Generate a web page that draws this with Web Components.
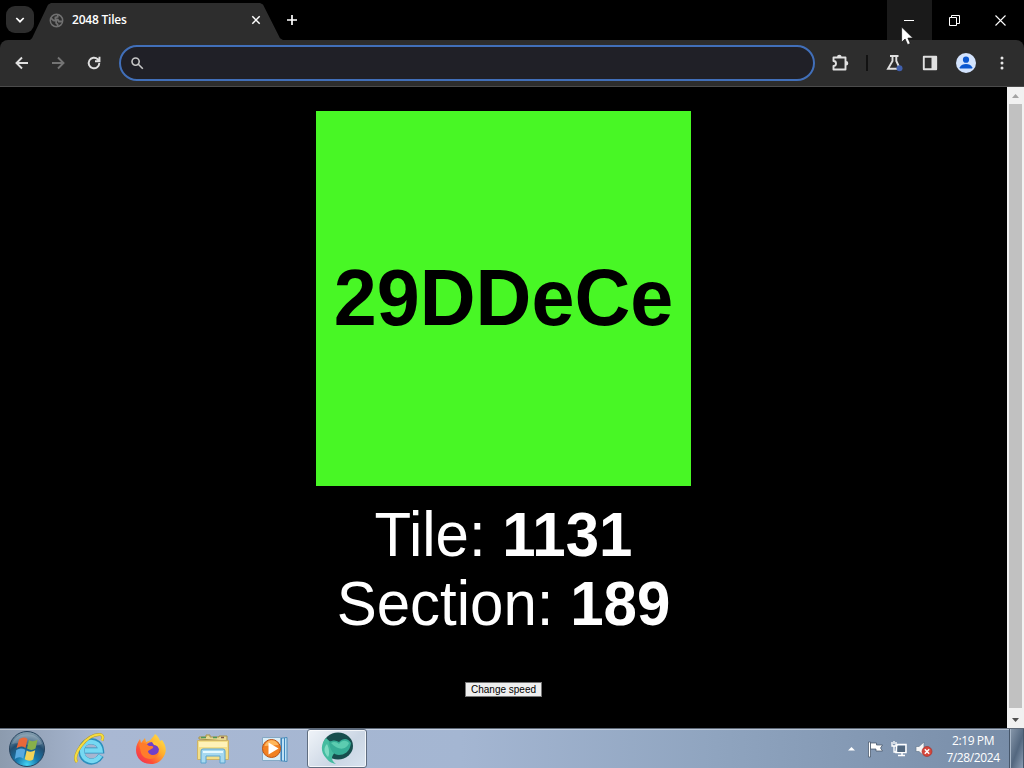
<!DOCTYPE html>
<html lang="en">
<head>
<meta charset="utf-8">
<title>2048 Tiles</title>
<style>
    html, body { margin: 0; height: 100%; overflow: hidden; background: #000; }
    body { font-family: "Liberation Sans", Arial, sans-serif; }
</style>
</head>
<body>
<desktop-screen>
    <browser-tabs slot="window">2048 Tiles</browser-tabs>
    <browser-toolbar slot="window"></browser-toolbar>
    <page-view slot="window">
        <number-tile color="#48f725">29DDeCe</number-tile>
        <tile-stats tile="1131" section="189"></tile-stats>
        <speed-button>Change speed</speed-button>
    </page-view>
    <task-bar slot="taskbar" time="2:19 PM" date="7/28/2024"></task-bar>
</desktop-screen>

<script>
// small base class, fills an open shadow root with the element's markup
class BaseElement extends HTMLElement {
    constructor() {
        super();
        this.attachShadow({ mode: 'open' });
    }

    connectedCallback() {
        const template = document.createElement('template');
        template.innerHTML = this.render();
        this.shadowRoot.replaceChildren(template.content.cloneNode(true));
    }
}

customElements.define('desktop-screen', class extends BaseElement {
    render() {
        return `
            <style>
                :host { display: flex; flex-direction: column; width: 1024px; height: 768px; position: relative; overflow: hidden; }
                .window { flex: 1; min-height: 0; display: flex; flex-direction: column; }
                .cursor { position: absolute; left: 901px; top: 26px; }
            </style>
            <div class="window"><slot name="window"></slot></div>
            <slot name="taskbar"></slot>
            <svg class="cursor" width="13" height="20" viewBox="0 0 13 20">
                <path d="M.6 1v15.3l3.5-3.3 2.5 5.7 2.7-1.2-2.4-5.4h5z" fill="#fff" stroke="#111" stroke-width=".7"/>
            </svg>
        `;
    }
});

customElements.define('browser-tabs', class extends BaseElement {
    render() {
        return `
            <style>
                :host { display: flex; height: 40px; flex: none; background: #000; color: #fff; }
                .search { width: 28px; height: 27px; margin: 6px 0 0 6px; border-radius: 9px; background: #2d2d2d; display: grid; place-items: center; }
                .tab {
                    box-sizing: border-box; width: 254px; height: 37px; margin: 3px 0 0 -4px; padding: 0 23px 3px 19px;
                    display: flex; align-items: center; background: #2d2d2d;
                    clip-path: polygon(0 100%, 2px 95%, 18px 5%, 21px 0, 230px 0, 233px 4%, 250px 95%, 253px 100%);
                }
                .title { flex: 1; margin-left: 8px; font: 600 12px/16px "Open Sans", sans-serif; letter-spacing: -.22px; }
                .new { margin: 14px 0 0 2px; }
                .controls { margin-left: auto; display: flex; }
                .controls div { box-sizing: border-box; width: 46px; height: 40px; padding-right: 1px; display: grid; place-items: center; }
                .controls .hover { width: 45px; background: #1a1a1a; }
                svg { display: block; fill: none; stroke: #fff; }
            </style>
            <div class="search">
                <svg width="10" height="8" viewBox="0 0 10 8" stroke-width="1.7"><path d="M1.3 2L5 5.7 8.7 2"/></svg>
            </div>
            <div class="tab">
                <svg width="15" height="15" viewBox="0 0 15 15" style="stroke:#707070">
                    <circle cx="7.5" cy="7.5" r="6.2" stroke-width="1.5"/>
                    <path d="M2 5.2l2.4 2.3 2.8.3v2.4l1.4 1.2v2M8.7 1.8v2L6.4 4.4v1.7l2.4.4 1 2h3.7" stroke-width="1.8"/>
                </svg>
                <div class="title"><slot></slot></div>
                <svg width="10" height="10" viewBox="0 0 10 10" stroke-width="1.5"><path d="M1.3 1.3l7.4 7.4M8.7 1.3L1.3 8.7"/></svg>
            </div>
            <svg class="new" width="12" height="12" viewBox="0 0 12 12" stroke-width="1.7"><path d="M6 1v10M1 6h10"/></svg>
            <div class="controls">
                <div class="hover"><svg width="10" height="10" viewBox="0 0 10 10"><path d="M0 5.5h10"/></svg></div>
                <div><svg width="11" height="11" viewBox="0 0 11 11"><path d="M.5 2.5h7v8h-7zM2.5 2.5v-2h8v8h-3"/></svg></div>
                <div><svg width="11" height="11" viewBox="0 0 11 11" stroke-width="1.1"><path d="M.5.5l10 10M10.5.5l-10 10"/></svg></div>
            </div>
        `;
    }
});

customElements.define('browser-toolbar', class extends BaseElement {
    render() {
        return `
            <style>
                :host {
                    box-sizing: border-box; display: flex; align-items: center; flex: none; height: 47px; padding: 0 14px 0 15px;
                    background: #2d2d2d; border-bottom: 1px solid #4b4b4b; border-radius: 8px 8px 0 0;
                }
                svg { display: block; flex: none; fill: none; stroke: #e0e0e0; stroke-width: 1.9; }
                .nav { display: flex; gap: 22px; width: 104px; }
                .omnibox {
                    box-sizing: border-box; width: 696px; height: 36px; border: 2px solid #416fb9; border-radius: 18px;
                    background: #202027; display: flex; align-items: center; padding-left: 10px;
                }
                .omnibox svg { stroke: #c8c8c8; stroke-width: 1.6; }
                .actions { flex: 1; display: flex; align-items: center; margin-left: 16px; }
                .line { width: 2px; height: 16px; margin: 0 18px 0 17px; background: #121212; }
            </style>
            <div class="nav">
                <svg width="14" height="14" viewBox="0 0 14 14"><path d="M13 7H2M7 1.5L1.5 7 7 12.5"/></svg>
                <svg width="14" height="14" viewBox="0 0 14 14" style="stroke:#747474"><path d="M1 7h11M7 1.5L12.5 7 7 12.5"/></svg>
                <svg width="14" height="14" viewBox="0 0 14 14"><path d="M12.3 7A5.3 5.3 0 1 1 10.7 3.2L12.3 5M12.5.8v4.5H8"/></svg>
            </div>
            <div class="omnibox">
                <svg width="13" height="13" viewBox="0 0 13 13"><circle cx="4.6" cy="4.6" r="3.6"/><path d="M7.3 7.3l4.5 4.5"/></svg>
            </div>
            <div class="actions">
                <svg width="18" height="18" viewBox="0 0 18 18">
                    <path d="M2.5 3.5h12v12h-12V12a2.5 2.5 0 0 0 0-5z" stroke-linejoin="round"/>
                    <path d="M6 3a2.3 2.3 0 0 1 4.600 0zM15 7a2.300 2.300 0 0 1 0 4.600z" fill="#e0e0e0" stroke="none"/>
                </svg>
                <div class="line"></div>
                <svg width="18" height="18" viewBox="0 0 18 18">
                    <path d="M4 2h8.5M6.5 2v5L2 14.8h12L10.300 7V2"/>
                    <circle cx="13.5" cy="14.3" r="3" fill="#405fac" stroke="none" style="stroke:none"/>
                </svg>
                <svg width="16" height="16" viewBox="0 0 16 16" style="margin-left:18px">
                    <path d="M1.8 1.8h12.4v12.4H1.8z" stroke-linejoin="round"/><path d="M9.500 2H14v12H9.500z" fill="#e0e0e0" stroke="none"/>
                </svg>
                <svg width="20" height="20" viewBox="0 0 20 20" style="stroke:none; margin-left:auto">
                    <circle cx="10" cy="10" r="10" fill="#d3e3fd"/><circle cx="10" cy="6.7" r="3.1" fill="#0b57d0"/>
                    <path d="M3.8 14.2C5 11.8 7.2 11 10 11s5 .8 6.2 3.2v1.2H3.8z" fill="#0b57d0"/>
                </svg>
                <svg width="16" height="16" viewBox="0 0 16 16" style="fill:#e8e8e8; stroke:none; margin-left:18px">
                    <circle cx="8" cy="2.9" r="1.5"/><circle cx="8" cy="8" r="1.5"/><circle cx="8" cy="13.1" r="1.5"/>
                </svg>
            </div>
        `;
    }
});

customElements.define('page-view', class extends BaseElement {
    render() {
        return `
            <style>
                :host { display: flex; flex: 1; min-height: 0; background: #000; }
                main { flex: 1; display: flex; flex-direction: column; align-items: center; padding-top: 24px; }
                aside { width: 17px; background: #f1f1f1; display: flex; flex-direction: column; align-items: center; }
                .up, .down { height: 17px; display: grid; place-items: center; flex: none; }
                .thumb { flex: 1; width: 13px; background: #c1c1c1; margin-bottom: 3px; }
            </style>
            <main><slot></slot></main>
            <aside>
                <div class="up"><svg width="7" height="4" viewBox="0 0 7 4"><path d="M0 4l3.5-4L7 4z" fill="#a3a3a3"/></svg></div>
                <div class="thumb"></div>
                <div class="down"><svg width="7" height="4" viewBox="0 0 7 4"><path d="M0 0l3.5 4L7 0z" fill="#505050"/></svg></div>
            </aside>
        `;
    }
});

customElements.define('number-tile', class extends BaseElement {
    render() {
        return `
            <style>
                :host { box-sizing: border-box; display: grid; place-items: center; width: 375px; height: 375px; padding-bottom: 2px; background: ${this.getAttribute('color')}; color: #000; }
                div { font-size: 77.3px; font-weight: bold; line-height: 90px; transform: scaleY(1.04); transform-origin: 0 80%; }
            </style>
            <div><slot></slot></div>
        `;
    }
});

customElements.define('tile-stats', class extends BaseElement {
    render() {
        return `
            <style>
                :host { display: block; margin-top: 15px; color: #fff; font-size: 60px; line-height: 69px; text-align: center; white-space: nowrap; }
                div { transform: scaleY(1.04); transform-origin: 0 80%; }
            </style>
            <div>Tile: <b>${this.getAttribute('tile')}</b></div>
            <div>Section: <b>${this.getAttribute('section')}</b></div>
        `;
    }
});

customElements.define('speed-button', class extends BaseElement {
    render() {
        return `
            <style>
                :host { display: block; margin-top: 43px; }
                button {
                    display: block; box-sizing: border-box; width: 77px; height: 15px; padding: 0; border: 1px solid #767676; border-radius: 0;
                    background: #efefef; color: #000; font: 10px/12px "Liberation Sans", sans-serif; white-space: nowrap;
                }
            </style>
            <button><slot></slot></button>
        `;
    }
});

customElements.define('task-bar', class extends BaseElement {
    render() {
        return `
            <style>
                :host {
                    box-sizing: border-box; display: flex; flex: none; height: 40px; border-top: 1px solid #5d6877; color: #fff;
                    background: linear-gradient(#ffffff66 0 1px, #ffffff00 1px), linear-gradient(90deg, #8c9bae, #a9b8d3 10%, #a4b6d2 45%, #8fa4bf 70%, #778ca7);
                }
                .start { width: 54px; display: grid; place-items: center; }
                .app { box-sizing: border-box; width: 60px; margin-right: 2px; display: grid; place-items: center; }
                .active { border: 1px solid #5f6d80; border-radius: 3px; background: linear-gradient(135deg, #f0f4f9, #cbd6e4 60%, #d8e3ef); box-shadow: inset 0 0 0 1px #ffffffbb; }
                .tray { margin-left: auto; display: flex; align-items: center; }
                .clock { width: 72px; margin-left: 4px; font: 12px/17px "Open Sans", sans-serif; letter-spacing: -.4px; text-align: center; }
                .peek { box-sizing: border-box; width: 15px; align-self: stretch; border: 1px solid #46566a; border-width: 0 1px; background: linear-gradient(110deg, #8999ac, #53677f 55%, #8b9db3); box-shadow: inset 1px 0 #a9b8c9; }
                svg { display: block; }
            </style>
            <div class="start">
                <svg width="38" height="38" viewBox="0 0 38 38">
                    <defs>
                        <radialGradient id="orb" cx=".5" cy=".95" r=".9"><stop offset="0" stop-color="#43d4f4"/><stop offset=".35" stop-color="#1878ac"/><stop offset=".7" stop-color="#234e70"/><stop offset="1" stop-color="#7f9aac"/></radialGradient>
                    </defs>
                    <circle cx="19" cy="19" r="17.5" fill="url(#orb)" stroke="#28445f"/>
                    <path d="M4 14C8 1 30 1 34 14 25 19 13 11 4 14z" fill="#fff" opacity=".2"/>
                    <path d="M11 9.5q4.5-3.5 8.5-.5L17.5 18q-4.5-3-9 .3z" fill="#e9683a"/>
                    <path d="M21 10q4 2.5 8.5-.3L27.5 18.5q-4 2.8-8.5 0z" fill="#87b04a"/>
                    <path d="M8.3 20q4.5-3 9-.2l-2 9q-4-3-8.5.2z" fill="#58a9df"/>
                    <path d="M18.7 20.5q4 2.5 8.5-.2l-2 9.2q-4 2.5-8.5-.2z" fill="#f3d357"/>
                </svg>
            </div>
            <div class="app" style="margin-left:5px">
                <svg width="34" height="34" viewBox="0 0 34 34" fill="none">
                    <path d="M29 23.5C23 34 9 30 9.5 18.5 10 6 28 6 29 18.5H13" stroke="#2b8fbd" stroke-width="6.2"/>
                    <path d="M28.5 23.5C22 33 10 29 10 18.5 11 7 27 7 28.5 18.5H13" stroke="#76d8f2" stroke-width="4.4"/>
                    <path d="M5 30C-1 24 14 2 28 2.5c3 .3 3.5 3 2 6" stroke="#b79a27" stroke-width="3"/>
                    <path d="M5 30C-1 24 14 2 28 2.5c3 .3 3.5 3 2 6" stroke="#f5dc40" stroke-width="2.2"/>
                </svg>
            </div>
            <div class="app">
                <svg width="32" height="36" viewBox="0 0 32 34">
                    <defs><linearGradient id="fox" x1="1" y1="0" x2="0" y2="1"><stop offset="0" stop-color="#fff04f"/><stop offset=".4" stop-color="#ffac2d"/><stop offset=".7" stop-color="#ff5037"/><stop offset="1" stop-color="#e82762"/></linearGradient></defs>
                    <path d="M20 2c3 2 4 4 5 7l2-1c3 4 5 9 3 14-3 7-8 10-14 10C7 32 1 26 1 18c0-5 2-8 4-11l1 4 4-5 1 4c3-1 5-2 6-4 1-1 2-2 3-4z" fill="url(#fox)"/>
                    <circle cx="17" cy="17" r="7" fill="#7140c8"/>
                    <path d="M4 12c4-2 7-1 10 2 3 0 5 0 4 2l-5 3c0 4 7 6 11 1-2 9-15 9-18 1z" fill="#ff7c2b"/>
                    <path d="M17 10c4-2 8 2 7 7-1-3-3-4-5-4z" fill="#ffc53c"/>
                </svg>
            </div>
            <div class="app">
                <svg width="34" height="32" viewBox="0 0 34 32">
                    <path d="M3 6V4h7V2h4v2h9V3h8v5z" fill="#e7d893" stroke="#a99348"/>
                    <path d="M5 4.5h5M17 4.5h4" stroke="#4c985a" stroke-width="1.5"/><path d="M25 4.5h3" stroke="#7e5445" stroke-width="1.5"/>
                    <path d="M1.5 7.5h31v19h-31z" fill="#f3df89" stroke="#cdb368"/>
                    <path d="M3 9h28v5H3z" fill="#fff2b8"/>
                    <path d="M5 30V18q0-2 2-2h20q2 0 2 2v12h-5v-7H10v7z" fill="#a6d9f0" stroke="#5aa3cf"/>
                    <path d="M7 19h20" stroke="#e5f9ff" stroke-width="2"/>
                </svg>
            </div>
            <div class="app">
                <svg width="28" height="28" viewBox="0 0 28 28">
                    <path d="M9 4.5l17-2v24l-17-2z" fill="#bfe1f4" stroke="#4a8dba"/><path d="M23.5 3v23M20.5 3v23" stroke="#3c85bd"/>
                    <path d="M1.5 2.5h18v23h-18z" fill="#d8edf7" stroke="#85a9c5"/>
                    <circle cx="10.5" cy="13.5" r="9" fill="#f18021" stroke="#ba5417"/><path d="M3.5 11c2-7.5 12-7.5 14-1z" fill="#ffb75c"/>
                    <path d="M7.5 7.5l10 6-10 6z" fill="#fff"/>
                </svg>
            </div>
            <div class="app active">
                <svg width="34" height="34" viewBox="0 0 34 34" style="margin-top:-2px">
                    <ellipse cx="18" cy="15" rx="15" ry="13.5" fill="#174e4e"/>
                    <path d="M6 7C1 12 0 21 6 27c3 4 6 5 10 6-4-3-5-6-3-9 4-5 2-9-7-17z" fill="#45bca0"/>
                    <path d="M9 11c4-2 7-2 10 0 4-4 9-4 12 1-1 9-7 12-12 12-5 0-9-4-10-13z" fill="#36ad96"/>
                    <path d="M11 12c3-2 6-1 8 1 3-4 7-4 10-1-2 6-10 9-18 0z" fill="#5cccb0"/>
                    <path d="M7 13c2 4 3 10 1 13-4-4-5-9-1-13z" fill="#7edbc2"/>
                </svg>
            </div>
            <div class="tray">
                <svg width="9" height="5" viewBox="0 0 9 5" style="margin-right:11px"><path d="M1 4.5L4.5 1 8 4.5z" fill="#fff"/></svg>
                <svg width="18" height="18" viewBox="0 0 18 18" style="margin-right:6px">
                    <path d="M1.5 2h2v15h-2z" fill="#fff" stroke="#3f4f62" stroke-width=".7"/><path d="M3.5 3h6v2h6l-2 3 2 3H9V9H3.5z" fill="#fff" stroke="#3f4f62" stroke-width=".7"/>
                </svg>
                <svg width="17" height="18" viewBox="0 0 17 18" style="margin-right:7px" fill="none">
                    <path d="M6 4.5h9v8H5zM11 12.5v3M7 15.5h7" stroke="#fff" stroke-width="1.5"/><path d="M6.5 6H14v6H6.5z" fill="#53687f"/>
                    <path d="M1 2v4h4V2M3 1v3M3 6v6h2" stroke="#fff" stroke-width="1.3"/>
                </svg>
                <svg width="18" height="18" viewBox="0 0 18 18">
                    <path d="M1 6.5h3L9 2v14l-5-4.500H1z" fill="#f6f6f6" stroke="#697b90" stroke-width=".7"/>
                    <circle cx="12" cy="11.5" r="5" fill="#d5463b" stroke="#a52b25" stroke-width=".6"/><path d="M9.8 9.3l4.4 4.4M14.2 9.3l-4.4 4.4" stroke="#fff" stroke-width="1.5"/>
                </svg>
                <div class="clock">${this.getAttribute('time')}<br>${this.getAttribute('date')}</div>
                <div class="peek"></div>
            </div>
        `;
    }
});
</script>
</body>
</html>
